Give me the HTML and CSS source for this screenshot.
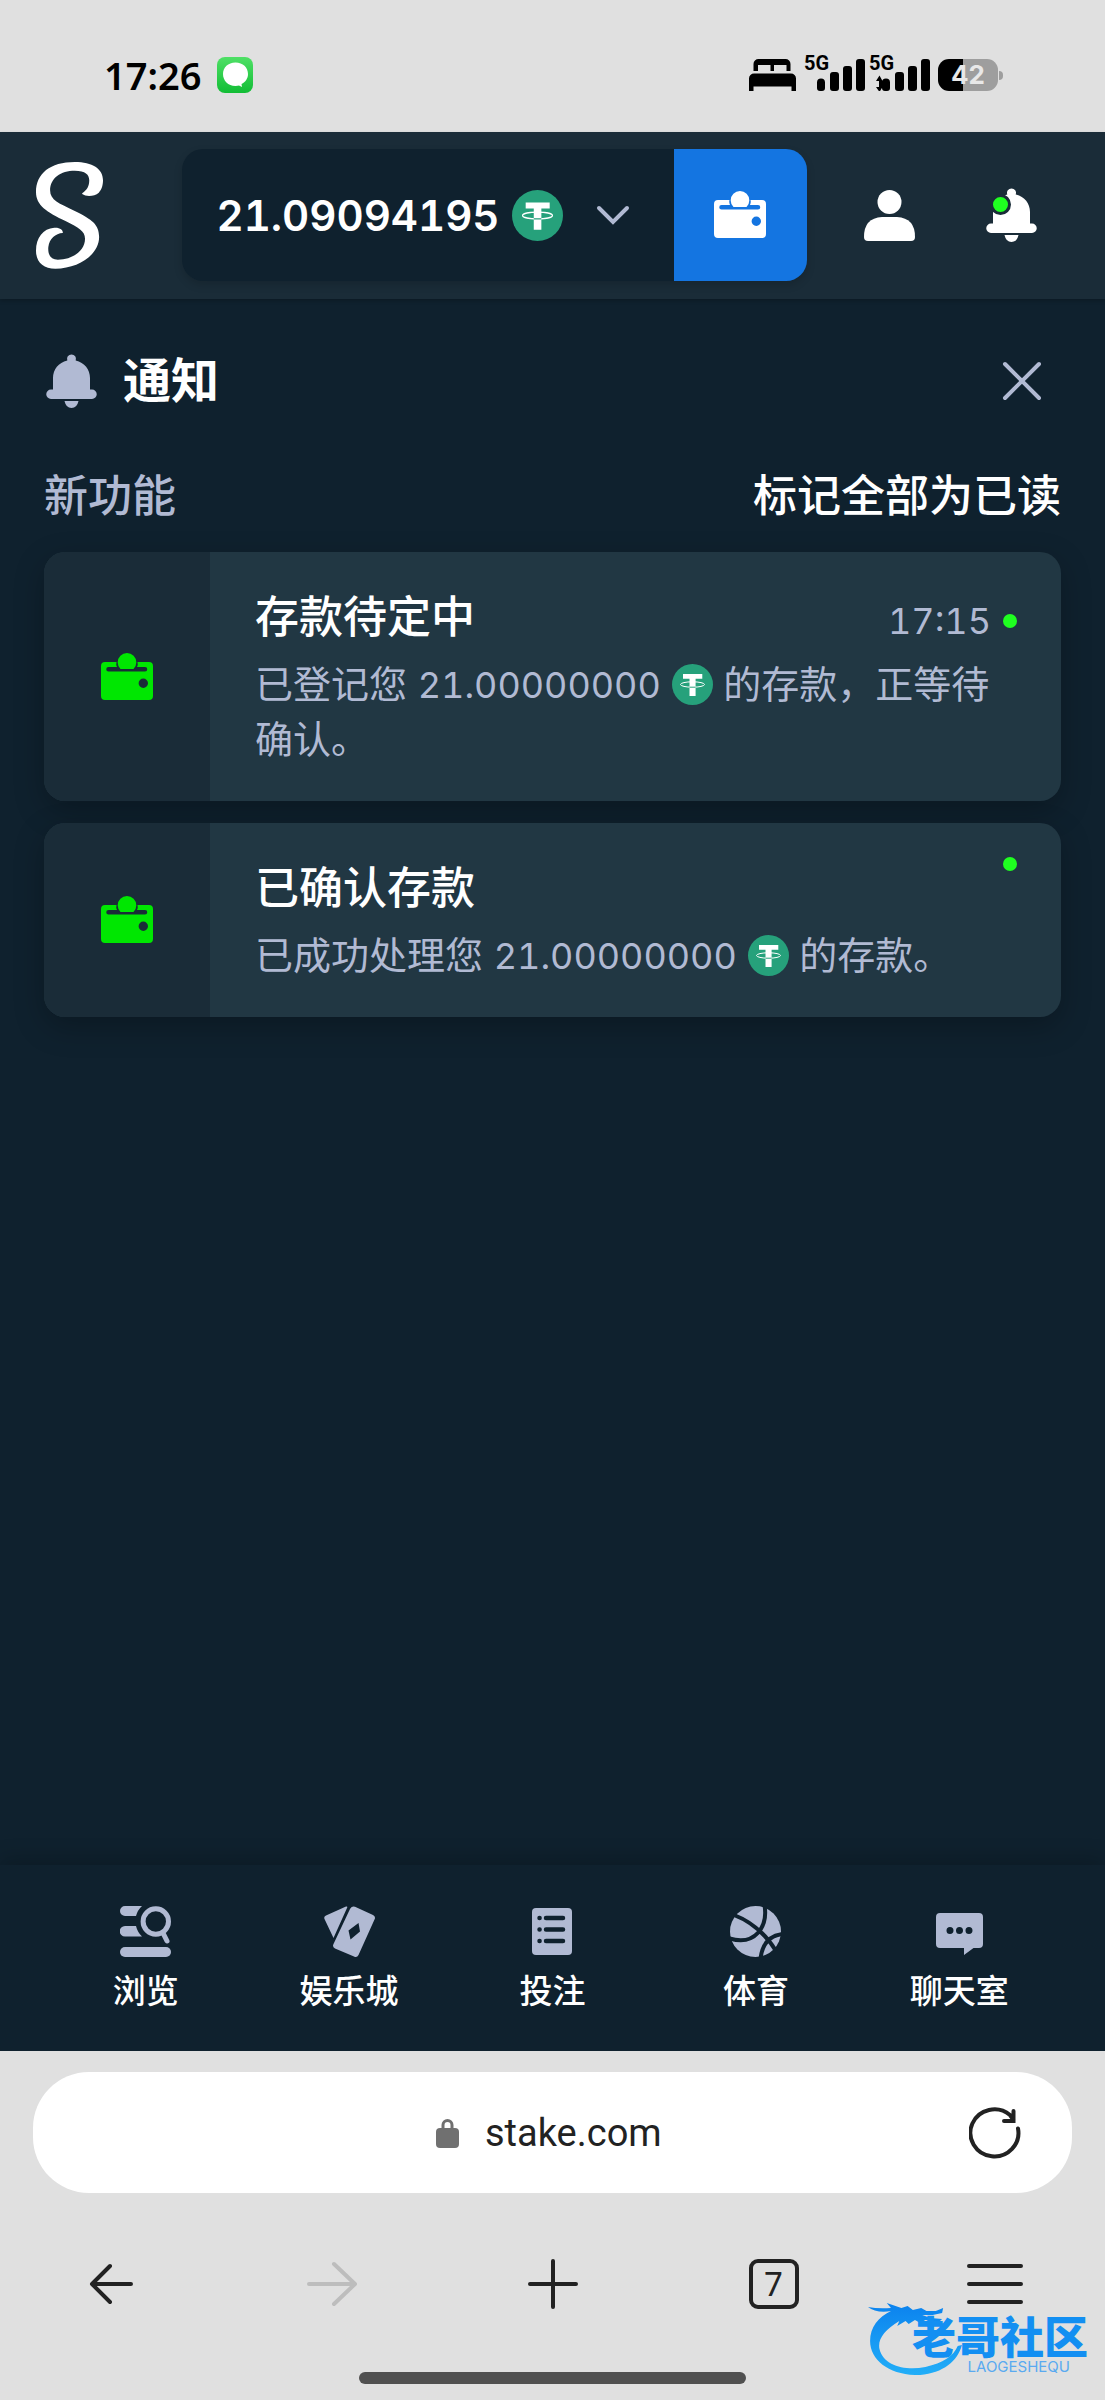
FILE: index.html
```html
<!DOCTYPE html>
<html lang="zh-CN">
<head>
    <meta charset="UTF-8">
    <meta name="viewport" content="width=device-width, initial-scale=1.0">
    <title>通知</title>
    <link rel="stylesheet" href="styles.css">
</head>
<body>

<svg class="sprite" aria-hidden="true">
    <symbol id="wallet" viewBox="0 0 52 48">
        <path fill-rule="evenodd" d="M4 9H15.500Q14.800 11.500 16 14H7.500a2.200 2.200 0 0 0 0 4.500H44a2.200 2.200 0 0 0 0-4.500H36Q37.200 11.500 36.500 9H48a4 4 0 0 1 4 4V43a4 4 0 0 1-4 4H4a4 4 0 0 1-4-4V13a4 4 0 0 1 4-4ZM42.300 25.500a4.700 4.700 0 1 0 0 9.400 4.700 4.700 0 0 0 0-9.400Z"/>
        <path d="M19.500 16A9.300 9.300 0 1 1 32.500 16Z"/>
    </symbol>
    <symbol id="bell" viewBox="0 0 51 54">
        <path d="M21.300 6.500A4.500 4.500 0 1 1 29.700 6.500C38.500 8.500 44 15.500 44 24V35.500H46a4.700 4.700 0 0 1 0 9.500H5a4.700 4.700 0 0 1 0-9.500H7V24C7 15.500 12.500 8.500 21.300 6.500Z"/>
        <path d="M18.500 47H32.500Q31 54 25.500 54T18.500 47Z"/>
    </symbol>
    <symbol id="tether" viewBox="0 0 41 41">
        <circle cx="20.500" cy="20.500" r="20.500" fill="#26a17b"/>
        <path fill="#fff" d="M11 10H30.300V14.800H23.600V32H17.500V14.800H11Z"/>
        <ellipse cx="20.500" cy="20.500" rx="12" ry="2.700" fill="none" stroke="#fff"/>
        <path d="M17.500 23.200H23.600" stroke="#26a17b"/>
    </symbol>
</svg>

<div class="status-bar">
    <div class="status-left">
        <span class="clock">17:26</span>
        <svg width="36" height="36" viewBox="0 0 36 36">
            <defs>
                <linearGradient id="msg" x1="0" y1="0" x2="0" y2="1">
                    <stop offset="0" stop-color="#4fe066"/>
                    <stop offset="1" stop-color="#12bd35"/>
                </linearGradient>
            </defs>
            <rect width="36" height="36" rx="8" fill="url(#msg)"/>
            <path d="M18.500 5.500C11 5.500 6 10.500 6 17s5 12 12.500 12c1.500 0 2.500-.2 3.500-.5l3 1.500-.5-3C28.500 25 31 21.500 31 17c0-6.500-5-11.500-12.500-11.500Z" fill="#fff"/>
        </svg>
    </div>
    <div class="status-right">
        <svg width="47" height="32" viewBox="0 0 47 32">
            <path d="M4.500 12V5a5 5 0 0 1 5-5h27a5 5 0 0 1 5 5v7H37.500V6H25v6h-3.500V6H9v6ZM5 14.500H42a5 5 0 0 1 5 5V32h-4.500v-4.500H4.500V32H0V19.500a5 5 0 0 1 5-5Z"/>
        </svg>
        <div class="signal">
            <span class="net">5G</span>
            <svg width="61" height="32" viewBox="0 0 61 32">
                <path d="M13 23.500a4 4 0 0 1 4-4h0a4 4 0 0 1 4 4V29a3 3 0 0 1-3 3h-2a3 3 0 0 1-3-3ZM26 16a3 3 0 0 1 3-3h3a3 3 0 0 1 3 3v13a3 3 0 0 1-3 3h-3a3 3 0 0 1-3-3ZM39 10a3 3 0 0 1 3-3h3a3 3 0 0 1 3 3v19a3 3 0 0 1-3 3h-3a3 3 0 0 1-3-3ZM52 3a3 3 0 0 1 3-3h3a3 3 0 0 1 3 3v26a3 3 0 0 1-3 3h-3a3 3 0 0 1-3-3Z"/>
            </svg>
        </div>
        <div class="signal">
            <span class="net">5G</span>
            <svg width="61" height="32" viewBox="0 0 61 32">
                <path d="M13 23.500a4 4 0 0 1 4-4h0a4 4 0 0 1 4 4V29a3 3 0 0 1-3 3h-2a3 3 0 0 1-3-3ZM26 16a3 3 0 0 1 3-3h3a3 3 0 0 1 3 3v13a3 3 0 0 1-3 3h-3a3 3 0 0 1-3-3ZM39 10a3 3 0 0 1 3-3h3a3 3 0 0 1 3 3v19a3 3 0 0 1-3 3h-3a3 3 0 0 1-3-3ZM52 3a3 3 0 0 1 3-3h3a3 3 0 0 1 3 3v26a3 3 0 0 1-3 3h-3a3 3 0 0 1-3-3ZM7 22l3.500-5.500 3 5.500v6l-3 5-3.500-5h3v-6Z"/>
            </svg>
        </div>
        <div class="battery"><span>42</span></div>
    </div>
</div>

<header class="header">
    <a class="logo" href="#" aria-label="Stake">
        <svg width="67" height="107" viewBox="0 0 190 321" preserveAspectRatio="none">
            <path fill="#fff" d="M131 96C143 105 166 103 178 92 187 83 190 68 190 55 190 20 160 0 110 0 40 0 0 35 0 90 0 130 30 150 85 178 120 196 139 208 139 230 139 265 105 293 62 293 42 293 33 278 35 255 38 230 55 214 76 213 77 205 70 196 52 197 20 199 0 227 0 266 0 300 20 320 55 320 120 320 179 278 179 225 179 188 160 173 110 147 65 124 40 115 40 85 40 48 70 26 110 26 140 26 151 38 151 55 151 72 145 84 131 94Z"/>
        </svg>
    </a>
    <div class="wallet">
        <button class="balance">
            <span>21.09094195</span>
            <svg class="coin" width="51" height="51"><use href="#tether"/></svg>
            <svg class="chevron" width="34" height="21" viewBox="0 0 34 21">
                <path d="M3 3 17 17 31 3" fill="none" stroke="#b1bad3" stroke-width="4" stroke-linecap="round"/>
            </svg>
        </button>
        <button class="deposit" aria-label="钱包">
            <svg width="52" height="48"><use href="#wallet"/></svg>
        </button>
    </div>
    <div class="actions">
        <button aria-label="账户">
            <svg width="51" height="51" viewBox="0 0 51 51">
                <circle cx="25.500" cy="12" r="12"/>
                <path d="M18 27H33Q51 28 51 47a4 4 0 0 1-4 4H4a4 4 0 0 1-4-4Q0 28 18 27Z"/>
            </svg>
        </button>
        <button class="bell-button" aria-label="通知">
            <svg width="51" height="54"><use href="#bell"/></svg>
            <span class="badge"></span>
        </button>
    </div>
</header>

<main class="content">
    <div class="title-row">
        <svg width="51" height="54"><use href="#bell"/></svg>
        <h1>通知</h1>
        <button aria-label="关闭">
            <svg width="40" height="40" viewBox="0 0 40 40">
                <path d="M3 3 37 37M37 3 3 37" stroke="#b1bad3" stroke-width="4" stroke-linecap="round"/>
            </svg>
        </button>
    </div>

    <div class="sub-row">
        <h2>新功能</h2>
        <button>标记全部为已读</button>
    </div>

    <article class="card">
        <div class="card-icon"><svg width="52" height="48"><use href="#wallet"/></svg></div>
        <div class="card-body">
            <div class="card-head">
                <h3>存款待定中</h3>
                <div class="meta"><time>17:15</time><span class="dot"></span></div>
            </div>
            <p>已登记您 <span class="amount">21.00000000</span> <svg class="coin" width="41" height="41"><use href="#tether"/></svg> 的存款，正等待确认。</p>
        </div>
    </article>

    <article class="card">
        <div class="card-icon"><svg width="52" height="48"><use href="#wallet"/></svg></div>
        <div class="card-body">
            <div class="card-head">
                <h3>已确认存款</h3>
                <div class="meta"><span class="dot"></span></div>
            </div>
            <p>已成功处理您 <span class="amount">21.00000000</span> <svg class="coin" width="41" height="41"><use href="#tether"/></svg> 的存款。</p>
        </div>
    </article>
</main>

<nav class="bottom-nav">
    <a href="#">
        <svg width="51" height="51" viewBox="0 0 51 51">
            <path d="M5 0H22A21 21 0 0 0 16 10H5A5 5 0 0 1 5 0ZM5 20H16A21 21 0 0 0 22 30.500H5A5 5 0 0 1 5 20Z"/>
            <rect y="41" width="51" height="10" rx="5"/>
            <circle cx="35.800" cy="15.500" r="12.700" fill="none" stroke="#b1bad3" stroke-width="5"/>
            <path d="M43 27 47 35" stroke="#b1bad3" stroke-width="5" stroke-linecap="round"/>
        </svg>
        浏览
    </a>
    <a href="#">
        <svg width="51" height="51" viewBox="0 0 51 51">
            <path d="M22 .5Q24 0 23 2L9.500 32 .5 13Q-.5 10.500 2 9.500Z"/>
            <path fill-rule="evenodd" d="M31 .8 49 9Q52 10.500 50.500 13.500L34.500 49Q33 52 30 50.500L11 42.500Q8 41 9.500 38L26 3Q27.500-.5 31 .8ZM34.500 17 36 25.500 26.500 33.500 24.500 24.500Z"/>
        </svg>
        娱乐城
    </a>
    <a href="#">
        <svg width="40" height="51" viewBox="0 0 40 51">
            <rect y="2" width="40" height="47" rx="4"/>
            <path d="M14 12H31M14 23.500H31M14 35H31M7.500 12H7.600M7.500 23.500H7.600M7.500 35H7.600" stroke="#0f212e" stroke-width="4.500" stroke-linecap="round"/>
        </svg>
        投注
    </a>
    <a href="#">
        <svg width="51" height="51" viewBox="0 0 51 51">
            <circle cx="25.500" cy="25.500" r="25.500"/>
            <path d="M4 9Q30 19 46 45M34.500-1C38 20 26 41-2 32M53 28Q33 30 30.500 53" fill="none" stroke="#0f212e" stroke-width="4"/>
        </svg>
        体育
    </a>
    <a href="#">
        <svg width="47" height="51" viewBox="0 0 47 51">
            <path fill-rule="evenodd" d="M4 7H43a4 4 0 0 1 4 4V38a4 4 0 0 1-4 4H37.500L28 49V42H4a4 4 0 0 1-4-4V11a4 4 0 0 1 4-4ZM14 21a3.500 3.500 0 1 0 0 7 3.500 3.500 0 0 0 0-7ZM23.500 21a3.500 3.500 0 1 0 0 7 3.500 3.500 0 0 0 0-7ZM33 21a3.500 3.500 0 1 0 0 7 3.500 3.500 0 0 0 0-7Z"/>
        </svg>
        聊天室
    </a>
</nav>

<footer class="browser">
    <div class="url-bar">
        <svg width="23" height="30" viewBox="0 0 23 30">
            <rect y="10" width="23" height="20" rx="4" fill="#707070"/>
            <path d="M7 11V7a4.500 4.500 0 0 1 9 0v4" fill="none" stroke="#707070" stroke-width="3"/>
        </svg>
        <input type="text" value="stake.com" aria-label="网址">
        <button class="reload" aria-label="刷新">
            <svg width="52" height="52" viewBox="0 0 52 52">
                <path d="M49 21.500A24 23.500 0 1 1 41 8L44.500 13M44.500 4V14H35" fill="none" stroke="#222" stroke-width="4" stroke-linecap="round"/>
            </svg>
        </button>
    </div>
    <div class="toolbar">
        <button aria-label="后退">
            <svg width="44" height="44" viewBox="0 0 44 44"><path d="M42 22H3M21 4 3 22 21 40"/></svg>
        </button>
        <button class="disabled" aria-label="前进">
            <svg width="50" height="46" viewBox="0 0 50 46"><path d="M2 23H48M27 3 48 23 27 43"/></svg>
        </button>
        <button aria-label="新建标签页">
            <svg width="50" height="50" viewBox="0 0 50 50"><path d="M2 25H48M25 2V48"/></svg>
        </button>
        <button class="tabs" aria-label="标签页">7</button>
        <button aria-label="菜单">
            <svg width="56" height="46" viewBox="0 0 56 46"><path d="M2 5H54M2 23H54M2 41H54"/></svg>
        </button>
    </div>
    <div class="home-bar"></div>

    <div class="watermark">
        <svg width="96" height="72" viewBox="0 0 92 72" preserveAspectRatio="none">
            <defs>
                <linearGradient id="dragon" x1="0" y1="0" x2="0" y2="1">
                    <stop offset="0" stop-color="#0b82ee"/>
                    <stop offset="1" stop-color="#22aef8"/>
                </linearGradient>
            </defs>
            <path fill="url(#dragon)" d="M0 4Q10 6 22 5L18 0 32 5 38 3 43 7 51 5 56 8 65 8 72 5 71 10 62 12 52 12 60 15 71 16 68 19 55 17 50 20 45 17 39 21 36 18 28 23 30 18C16 27 9 36 11 46 15 63 36 68 55 64 72 60 82 53 86 43L90 42C86 58 72 70 50 72 22 73 2 58 2 38 2 24 10 14 22 8 13 10 5 8 0 4Z"/>
        </svg>
        <div class="watermark-text">
            <strong>老哥社区</strong>
            <small>LAOGESHEQU</small>
        </div>
    </div>
</footer>

</body>
</html>
```
FILE: styles.css
```css
* { box-sizing: border-box; }
body { margin: 0; min-height: 100vh; display: flex; flex-direction: column; background: #0f212e; color: #fff; font-family: Inter, "Noto Sans CJK SC", sans-serif; }
h1, h2, h3, p { margin: 0; }
svg { display: block; flex: none; fill: currentColor; }
button { display: flex; align-items: center; justify-content: center; padding: 0; border: 0; background: none; color: inherit; font-family: inherit; cursor: pointer; }
a { color: inherit; text-decoration: none; }
.sprite { position: absolute; width: 0; height: 0; }

/* status bar */
.status-bar { display: flex; justify-content: space-between; align-items: center; height: 132px; padding: 18px 107px 0 104px; background: #e0e0e0; color: #000; }
.status-left { display: flex; align-items: center; gap: 16px; }
.clock { font-family: "Noto Sans", sans-serif; font-size: 38px; line-height: 48px; font-weight: 600; }
.status-right { display: flex; align-items: center; gap: 4px; }
.status-right > svg { margin-right: 4px; }
.signal { position: relative; }
.net { position: absolute; top: -6px; left: 0; font-family: Roboto, sans-serif; font-size: 20px; line-height: 20px; font-weight: 700; }
.battery { position: relative; width: 60px; margin-left: 4px; border-radius: 11px; background: linear-gradient(90deg, #000 42%, #9e9e9e 42%); color: #e8e8e8; font-size: 26px; line-height: 32px; font-weight: 700; text-align: center; }
.battery::after { content: ""; position: absolute; right: -5px; top: 12px; width: 4px; height: 9px; border-radius: 0 4px 4px 0; background: #9e9e9e; }

/* header */
.header { display: flex; justify-content: space-between; align-items: center; padding: 17px 68px 18px 36px; background: #1a2c38; box-shadow: 0 2px 4px rgba(0, 0, 0, 0.2); }
.logo { padding-right: 22px; }
.wallet { display: flex; border-radius: 21px; box-shadow: 0 4px 8px rgba(0, 0, 0, 0.15); }
.balance { padding: 0 44px 0 34px; border-radius: 21px 0 0 21px; background: #0f212e; font-size: 42px; font-weight: 600; font-variant-numeric: tabular-nums; }
.balance .coin { margin-left: 12px; }
.balance .chevron { margin-left: 33px; }
.deposit { width: 133px; height: 132px; border-radius: 0 21px 21px 0; background: #1475e1; }
.actions { display: flex; align-items: center; gap: 71px; }
.bell-button { position: relative; }
.badge { position: absolute; top: 6px; left: 4px; width: 21px; height: 21px; border: 3px solid #1a2c38; border-radius: 50%; background: #1fff20; }

/* notifications */
.content { flex: 1; padding: 44px; }
.title-row { display: flex; align-items: center; gap: 26px; padding: 0 19px 0 2px; color: #b1bad3; }
.title-row h1 { flex: 1; color: #fff; font-size: 48px; line-height: 76px; font-weight: 600; }
.sub-row { display: flex; justify-content: space-between; margin: 45px 0 24px; }
.sub-row h2 { color: #b1bad3; font-size: 44px; line-height: 64px; font-weight: 500; }
.sub-row button { font-size: 44px; line-height: 64px; font-weight: 500; }
.card { display: flex; margin-bottom: 22px; border-radius: 21px; overflow: hidden; background: #213743; box-shadow: 0 10px 30px rgba(0, 0, 0, 0.25); }
.card-icon { display: flex; align-items: center; justify-content: center; width: 166px; background: #1a2c38; color: #00e701; }
.card-body { flex: 1; padding: 34px 44px 34px 45px; }
.card-head { display: flex; justify-content: space-between; align-items: flex-start; height: 71px; }
.card-head h3 { font-size: 44px; line-height: 62px; font-weight: 500; }
.meta { display: flex; align-items: center; gap: 12px; color: #b1bad3; font-size: 36px; line-height: 70px; font-variant-numeric: tabular-nums; }
.dot { width: 14px; height: 14px; border-radius: 50%; background: #1fff20; }
.card p { color: #b1bad3; font-size: 38px; line-height: 55px; }
.card .coin { display: inline-block; vertical-align: middle; margin: -8px 0 -2px; }
.amount { font-size: 36px; line-height: 48px; font-variant-numeric: tabular-nums; }

/* bottom nav */
.bottom-nav { display: grid; grid-template-columns: repeat(5, 1fr); padding: 41px 44px 36px; box-shadow: 0 -6px 20px rgba(0, 0, 0, 0.2); }
.bottom-nav a { display: flex; flex-direction: column; align-items: center; gap: 10px; font-size: 33px; line-height: 48px; font-weight: 500; }
.bottom-nav svg { color: #b1bad3; }

/* browser chrome */
.browser { position: relative; padding: 21px 0 16px; background: #e0e0e0; color: #222; }
.url-bar { position: relative; display: flex; align-items: center; justify-content: center; gap: 26px; height: 121px; margin: 0 33px; border-radius: 56px; background: #fff; }
.url-bar input { width: 184px; padding: 0; border: 0; background: none; color: #222; font-family: Roboto, sans-serif; font-size: 38px; }
.reload { position: absolute; right: 51px; }
.toolbar { display: grid; grid-template-columns: repeat(5, 1fr); padding: 64px 0 61px; }
.toolbar button { height: 54px; justify-self: center; }
.toolbar path { fill: none; stroke: currentColor; stroke-width: 4; stroke-linecap: round; stroke-linejoin: round; }
.toolbar .disabled { color: #bdbdbd; }
.toolbar .tabs { width: 50px; height: 50px; align-self: center; border: 4px solid #222; border-radius: 9px; font-family: "Noto Sans", sans-serif; font-size: 33px; line-height: 42px; }
.home-bar { width: 35%; height: 12px; margin: 0 auto; border-radius: 6px; background: #505050; }
.watermark { position: absolute; right: 17px; bottom: 25px; display: flex; align-items: flex-end; }
.watermark-text { margin-left: -52px; display: flex; flex-direction: column; align-items: flex-end; color: #138ff2; }
.watermark strong { font-family: "Noto Sans CJK SC", sans-serif; font-size: 44px; line-height: 48px; font-weight: 900; }
.watermark small { margin-right: 18px; font-size: 15px; line-height: 16px; color: #5aaaf0; }
```
